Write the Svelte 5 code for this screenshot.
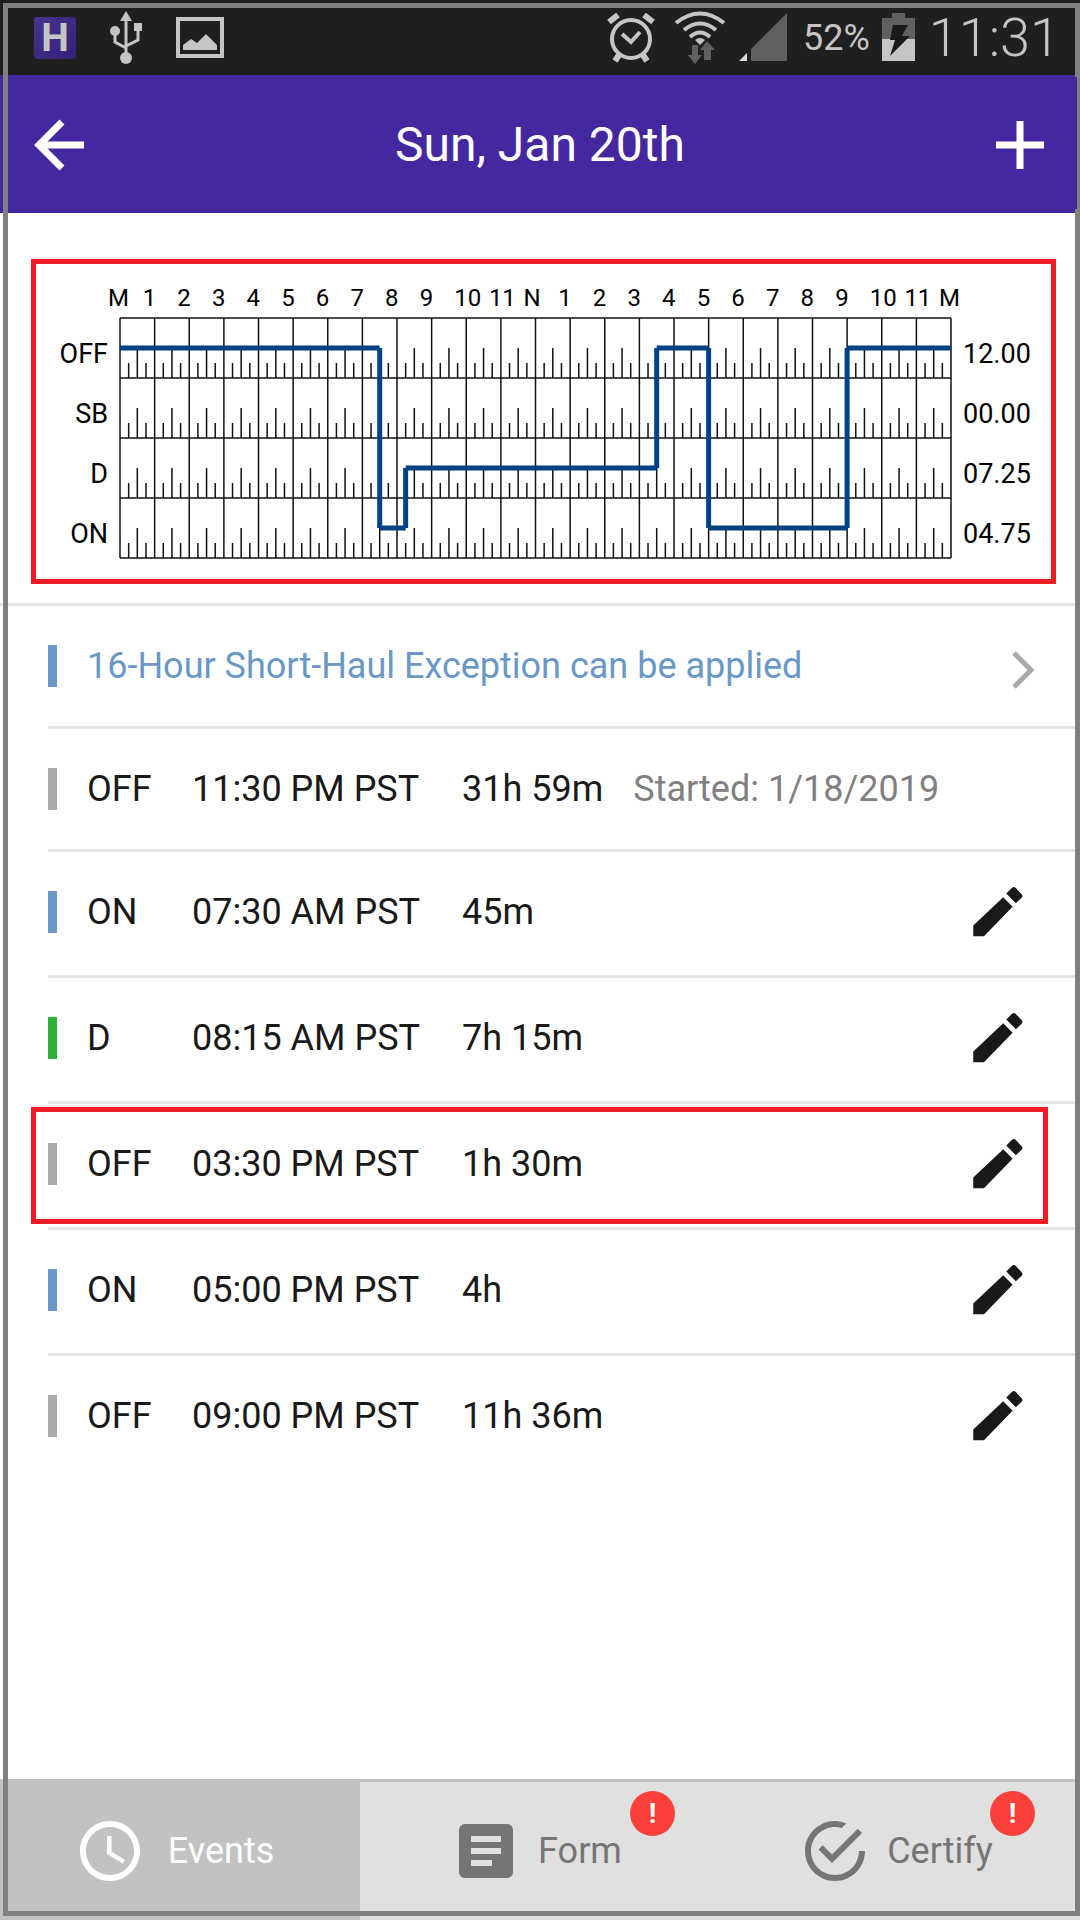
<script>
  const GRID_LEFT = 84;
  const GRID_TOP = 54;
  const HOUR = 34.625;
  const ROW = 60;

  const hourLabels = ['M', 1, 2, 3, 4, 5, 6, 7, 8, 9, 10, 11, 'N', 1, 2, 3, 4, 5, 6, 7, 8, 9, 10, 11, 'M'];

  const statuses = [
    { code: 'OFF', total: '12.00' },
    { code: 'SB', total: '00.00' },
    { code: 'D', total: '07.25' },
    { code: 'ON', total: '04.75' }
  ];

  // row = index into statuses, from/to in hours
  const segments = [
    { row: 0, from: 0, to: 7.5 },
    { row: 3, from: 7.5, to: 8.25 },
    { row: 2, from: 8.25, to: 15.5 },
    { row: 0, from: 15.5, to: 17 },
    { row: 3, from: 17, to: 21 },
    { row: 0, from: 21, to: 24 }
  ];

  const events = [
    { status: 'OFF', time: '11:30 PM PST', duration: '31h 59m', note: 'Started: 1/18/2019' },
    { status: 'ON', time: '07:30 AM PST', duration: '45m' },
    { status: 'D', time: '08:15 AM PST', duration: '7h 15m' },
    { status: 'OFF', time: '03:30 PM PST', duration: '1h 30m', marked: true },
    { status: 'ON', time: '05:00 PM PST', duration: '4h' },
    { status: 'OFF', time: '09:00 PM PST', duration: '11h 36m' }
  ];

  const tabs = [
    { id: 'events', label: 'Events' },
    { id: 'form', label: 'Form', alert: true },
    { id: 'certify', label: 'Certify', alert: true }
  ];

  let active = $state('events');

  const x = (hour) => GRID_LEFT + hour * HOUR;
  const mid = (row) => GRID_TOP + row * ROW + ROW / 2;

  let ticks = $derived.by(() => {
    let d = '';
    for (let row = 0; row < 4; row++) {
      const base = GRID_TOP + (row + 1) * ROW;
      for (let q = 0; q < 96; q++) {
        if (q % 4 === 0) continue;
        d += `M${x(q / 4)} ${base}v${q % 2 === 0 ? -30 : -15}`;
      }
    }
    return d;
  });
</script>

<div class="screen">
  <div class="status-bar">
    <div class="status-left">
      <span class="app-badge">H</span>
      <svg width="32" height="54" viewBox="0 0 32 54" fill="#c5c5c5">
        <path d="M16 0l6 10H10z" />
        <circle cx="5" cy="20" r="5" />
        <path d="M24 12h8v8h-8z" />
        <circle cx="16" cy="47" r="6" />
        <path d="M16 8v36M5 22v9l11 6M28 18v11l-12 6" fill="none" stroke="#c5c5c5" stroke-width="3" />
      </svg>
      <svg width="48" height="42" viewBox="0 0 48 42">
        <path d="M2 2h44v37H2z" fill="none" stroke="#c5c5c5" stroke-width="4" />
        <path d="M7 33v-5l8-6 6 4 9-9 11 11v5z" fill="#c5c5c5" />
      </svg>
    </div>
    <div class="status-right">
      <svg width="56" height="50" viewBox="0 0 56 50" fill="none" stroke="#c5c5c5">
        <circle cx="24" cy="26" r="19" stroke-width="4" />
        <path d="M15 21l9 8 9-10" stroke-width="4" />
        <path d="M2 9l9-7M46 9l-9-7" stroke-width="6" />
        <path d="M12 42l-4 6M36 42l4 6" stroke-width="6" />
      </svg>
      <svg width="52" height="54" viewBox="0 0 52 54" fill="none">
        <g stroke="#c5c5c5" stroke-width="4">
          <path d="M1 12Q25-7 49 12" />
          <path d="M9 19Q25 6 41 19" />
          <path d="M15 26Q25 17 35 26" />
        </g>
        <path d="M20 29Q25 25 30 29L25 34z" fill="#c5c5c5" />
        <path d="M17 34h6v10h4l-7 9-7-9h4zM29 49V39h-4l7-9 8 9h-4v10z" fill="#606060" />
      </svg>
      <svg width="52" height="50" viewBox="0 0 52 50">
        <path d="M48 0v48H12V36z" fill="#606060" />
        <path d="M8 40v8H0z" fill="#d8d8d8" />
      </svg>
      <span class="percent">52%</span>
      <svg width="33" height="50" viewBox="0 0 33 50">
        <path d="M10 0h13v5h10v21H0V5h10z" fill="#606060" />
        <path d="M0 26h33v22H0z" fill="#c5c5c5" />
        <path d="M11 12h15l-6 11h8L8 43l5-16H8z" fill="#1a1a1a" />
      </svg>
      <time>11:31</time>
    </div>
  </div>

  <header>
    <button class="icon-button" aria-label="Back">
      <svg width="52" height="52" viewBox="0 0 52 52" fill="none" stroke="#fff" stroke-width="7">
        <path d="M30 3L7 26l23 23M8 26h44" />
      </svg>
    </button>
    <h1>Sun, Jan 20th</h1>
    <button class="icon-button" aria-label="Add event">
      <svg width="48" height="48" viewBox="0 0 48 48" stroke="#fff" stroke-width="7">
        <path d="M24 0v48M0 24h48" />
      </svg>
    </button>
  </header>

  <section class="log">
    <svg class="chart" viewBox="0 0 1015 315" role="img" aria-label="Hours of service graph">
      <g class="hours">
        {#each hourLabels as label, i}
          <text x={x(i) - 12} y="42">{label}</text>
        {/each}
      </g>
      <g class="grid">
        {#each hourLabels as _, i}
          <path d="M{x(i)} {GRID_TOP}v{ROW * 4}" />
        {/each}
        {#each [0, 1, 2, 3, 4] as i}
          <path d="M{GRID_LEFT} {GRID_TOP + i * ROW}h{HOUR * 24}" />
        {/each}
        <path d={ticks} />
      </g>
      <g class="trace">
        {#each segments as s, i}
          <path d="M{x(s.from)} {mid(s.row)}H{x(s.to)}" />
          {#if segments[i + 1]}
            <path d="M{x(s.to)} {mid(s.row)}V{mid(segments[i + 1].row)}" />
          {/if}
        {/each}
      </g>
      <g class="totals">
        {#each statuses as s, i}
          <text x="72" y={mid(i) + 15} text-anchor="end">{s.code}</text>
          <text x="927" y={mid(i) + 15}>{s.total}</text>
        {/each}
      </g>
    </svg>
  </section>

  <ul class="events">
    <li class="row compact">
      <span class="bar on"></span>
      <a class="exception" href="#exception">16-Hour Short-Haul Exception can be applied</a>
      <svg class="chevron" width="24" height="48" viewBox="0 0 24 48" fill="none" stroke="#aaa" stroke-width="5">
        <path d="M2 11l17 17L2 45" />
      </svg>
    </li>
    {#each events as event}
      <li class="row" class:compact={event.note} class:marked={event.marked}>
        <span class="bar {event.status.toLowerCase()}"></span>
        <span class="status">{event.status}</span>
        <span class="time">{event.time}</span>
        <span class="duration">{event.duration}</span>
        {#if event.note}
          <span class="note">{event.note}</span>
        {:else}
          <button class="edit" aria-label="Edit {event.time}">
            <svg width="66" height="66" viewBox="0 0 24 24" fill="#191919">
              <path d="M3 16.900v3.900h3.900L17.300 10.100l-3.400-3.500zM20.600 6.800c.4-.4.4-.9 0-1.300l-2.200-2.300c-.4-.4-.9-.4-1.300 0L15 5.300l3.500 3.500z" />
            </svg>
          </button>
        {/if}
      </li>
    {/each}
  </ul>

  <nav>
    {#each tabs as tab}
      <button class="tab" class:active={active === tab.id} onclick={() => (active = tab.id)}>
        <svg width="72" height="72" viewBox="0 0 24 24" fill="currentColor">
          {#if tab.id === 'events'}
            <path d="M11.990 2C6.470 2 2 6.480 2 12s4.470 10 9.990 10C17.520 22 22 17.520 22 12S17.520 2 11.990 2zM12 20c-4.420 0-8-3.580-8-8s3.580-8 8-8 8 3.580 8 8-3.580 8-8 8zM12.500 7H11v6l5.250 3.150.75-1.230-4.500-2.670z" />
          {:else if tab.id === 'form'}
            <path d="M19 3H5c-1.100 0-2 .9-2 2v14c0 1.100.9 2 2 2h14c1.100 0 2-.9 2-2V5c0-1.100-.9-2-2-2zm-5 14H7v-2h7v2zm3-4H7v-2h10v2zm0-4H7V7h10v2z" />
          {:else}
            <path d="M20 12c0 4.400-3.600 8-8 8s-8-3.600-8-8 3.600-8 8-8c.8 0 1.500.1 2.200.3L15.800 2.800C14.600 2.300 13.300 2 12 2 6.500 2 2 6.500 2 12s4.500 10 10 10 10-4.500 10-10zM7.900 10.100L6.500 11.500 11 16 21 6l-1.400-1.400L11 13.200z" />
          {/if}
        </svg>
        <span>{tab.label}</span>
        {#if tab.alert}
          <span class="badge">!</span>
        {/if}
      </button>
    {/each}
  </nav>

  <div class="frame"></div>
</div>

<style>
  :global(body) {
    margin: 0;
    background: #fff;
  }

  .screen {
    position: relative;
    display: flex;
    flex-direction: column;
    min-height: 100vh;
    background: #fff;
    color: #191919;
    font-family: Roboto, 'Noto Sans', sans-serif;
    font-size: 36px;
    line-height: 42px;
  }

  svg {
    display: block;
    flex-shrink: 0;
  }

  button {
    padding: 0;
    border: 0;
    background: none;
    color: inherit;
    font: inherit;
    cursor: pointer;
  }

  .frame {
    position: absolute;
    inset: 3px 0 4px 3px;
    border: 5px solid #808080;
    pointer-events: none;
  }

  .status-bar {
    display: flex;
    justify-content: space-between;
    align-items: center;
    height: 75px;
    padding: 0 20px 0 34px;
    box-sizing: border-box;
    background: #1f1f1f;
    color: #c5c5c5;
  }

  .status-left,
  .status-right {
    display: flex;
    align-items: center;
  }

  .status-left {
    gap: 34px;
  }

  .status-right {
    gap: 12px;
  }

  .app-badge {
    width: 42px;
    border-radius: 3px;
    background: linear-gradient(135deg, #48348c, #35207a);
    font-size: 39px;
    font-weight: 700;
    text-align: center;
  }

  time {
    margin-left: 2px;
    font-size: 54px;
    font-weight: 300;
  }

  header {
    position: relative;
    display: flex;
    justify-content: space-between;
    align-items: center;
    height: 138px;
    padding: 2px 36px 0 32px;
    box-sizing: border-box;
    background: #45289f;
    color: #fff;
  }

  /* keeps the header colour over the inner edge of the frame */
  header::after {
    content: '';
    position: absolute;
    z-index: 1;
    inset: 2px 3px 4px auto;
    width: 2px;
    background: #45289f;
  }

  h1 {
    margin: 0;
    font-size: 48px;
    font-weight: 400;
    line-height: 56px;
  }

  .log {
    padding: 46px 24px 19px 31px;
    border-bottom: 3px solid #e5e5e5;
  }

  .chart {
    width: 100%;
    box-sizing: border-box;
    border: 5px solid #ee1c25;
  }

  .hours {
    font-size: 24px;
    fill: #000;
  }

  .totals {
    font-size: 27px;
    fill: #000;
  }

  .grid {
    fill: none;
    stroke: #111;
    stroke-width: 1.5;
  }

  .trace {
    fill: none;
    stroke: #004282;
    stroke-width: 5;
  }

  .events {
    margin: 0 0 0 48px;
    padding: 0;
    list-style: none;
  }

  .row {
    position: relative;
    display: flex;
    align-items: center;
    height: 42px;
    padding: 39px 49px 42px 0;
    border-bottom: 3px solid #e5e5e5;
  }

  .row.compact {
    padding: 39px 44px 39px 0;
  }

  .row:last-child {
    border-bottom: 0;
  }

  .row.marked::after {
    content: '';
    position: absolute;
    inset: 3px 32px 3px -17px;
    border: 5px solid #ee1c25;
    pointer-events: none;
  }

  .bar {
    width: 9px;
    height: 42px;
    margin-right: 30px;
    background: #aaa;
  }

  .bar.on {
    background: #6998c6;
  }

  .bar.d {
    background: #2fb135;
  }

  .exception {
    color: #6998c6;
    text-decoration: none;
  }

  .chevron,
  .edit {
    margin-left: auto;
  }

  .status {
    width: 105px;
  }

  .time {
    width: 270px;
  }

  .note {
    margin-left: 30px;
    color: #808080;
  }

  nav {
    display: grid;
    grid-template-columns: repeat(3, 1fr);
    height: 138px;
    margin-top: auto;
    border-top: 3px solid #c1c1c1;
    background: #e0e0e0;
  }

  .tab {
    position: relative;
    display: flex;
    justify-content: center;
    align-items: center;
    gap: 16px;
    padding-right: 8px;
    color: #757575;
  }

  .tab.active {
    gap: 22px;
    padding-right: 12px;
    background: #c2c2c2;
    color: #fff;
  }

  .badge {
    position: absolute;
    top: 9px;
    right: 45px;
    width: 45px;
    height: 45px;
    border-radius: 50%;
    background: #fa403a;
    color: #fff;
    font-size: 28px;
    font-weight: 700;
    line-height: 45px;
    text-align: center;
  }
</style>
